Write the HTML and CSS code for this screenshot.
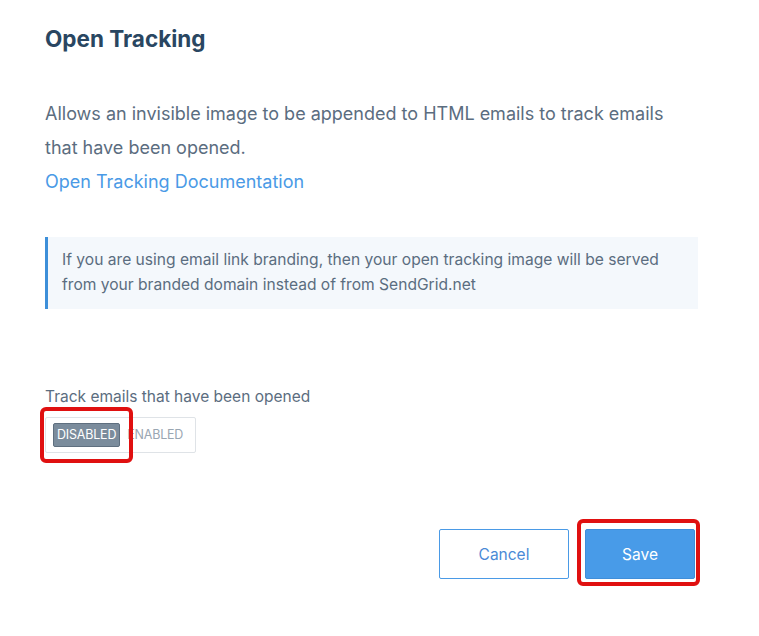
FILE: index.html
```html
<!DOCTYPE html>
<html lang="en">
<head>
  <meta charset="UTF-8" />
  <meta name="viewport" content="width=device-width, initial-scale=1" />
  <title>Open Tracking</title>
  <link rel="stylesheet" href="styles.css">
</head>
<body>

  <main class="panel">
    <h2 class="panel-title">Open Tracking</h2>

    <p class="panel-desc">
      Allows an invisible image to be appended to HTML emails to track emails that have been opened.
      <a href="#" class="doc-link">Open Tracking Documentation</a>
    </p>

    <div class="callout">
      If you are using email link branding, then your open tracking image will be served
      from your branded domain instead of from SendGrid.net
    </div>

    <div class="field">
      <label class="field-label">Track emails that have been opened</label>
      <div class="toggle">
        <span class="mark mark-toggle"><button class="toggle-btn active">DISABLED</button></span>
        <button class="toggle-btn">ENABLED</button>
      </div>
    </div>

    <div class="actions">
      <button class="btn btn-secondary">Cancel</button>
      <span class="mark mark-save"><button class="btn btn-primary">Save</button></span>
    </div>
  </main>

</body>
</html>
```

FILE: styles.css
```css
* {
  box-sizing: border-box;
  margin: 0;
  padding: 0;
}

html, body {
  min-height: 100%;
}

body {
  background: #fff;
  font-family: Inter, "Open Sans", sans-serif;
  color: #5b6d80;
}

.panel {
  width: 698px;
  padding: 24px 0 58px 45px;
}

.panel-title {
  font-size: 22.5px;
  font-weight: 700;
  color: #294661;
  line-height: 30px;
}

.panel-desc {
  margin-top: 43px;
  font-size: 18px;
  line-height: 34px;
  width: 640px;
}

.doc-link {
  display: block;
  color: #4a9ae6;
  text-decoration: none;
}

.callout {
  margin-top: 38px;
  background: #f4f8fc;
  border-left: 3px solid #3d8fd9;
  padding: 10px 14px 12px;
  font-size: 15.6px;
  line-height: 25px;
}

.field {
  margin-top: 78px;
}

.field-label {
  display: block;
  font-size: 15.5px;
  line-height: 20px;
}

.toggle {
  display: inline-flex;
  align-items: center;
  gap: 3px;
  margin-top: 10px;
  padding: 5px 8px 5px 7px;
  border: 1px solid #dfe3e7;
  border-radius: 2px;
}

.toggle-btn {
  font-family: inherit;
  font-size: 12.5px;
  letter-spacing: -0.2px;
  line-height: 22px;
  padding: 0 3px;
  border: 1px solid transparent;
  border-radius: 2px;
  background: transparent;
  color: #9aa6b2;
}

.toggle-btn.active {
  background: #7b8c9c;
  border-color: #5f6f7f;
  color: #fff;
}

/* red highlight frames drawn over the screenshot */
.mark {
  position: relative;
  z-index: 1;
  display: inline-flex;
  border: 4px solid #e01010;
  border-radius: 6px;
}

.mark-toggle {
  padding: 12px 9px 12px 9px;
  margin: -16px -13px -16px -13px;
}

.mark-save {
  padding: 6px 1px 3px 4px;
  margin: -10px -5px -7px -8px;
}

.actions {
  display: flex;
  justify-content: flex-end;
  align-items: center;
  gap: 16px;
  margin-top: 76px;
  padding-right: 3px;
}

.btn {
  font-family: inherit;
  font-size: 15.5px;
  height: 50px;
  border-radius: 2px;
  cursor: pointer;
}

.btn-secondary {
  width: 130px;
  background: #fff;
  border: 1px solid #4a9ae6;
  color: #4a8ad6;
}

.btn-primary {
  width: 110px;
  background: #489be8;
  border: 1px solid #3f8ed9;
  color: #fff;
}
```
